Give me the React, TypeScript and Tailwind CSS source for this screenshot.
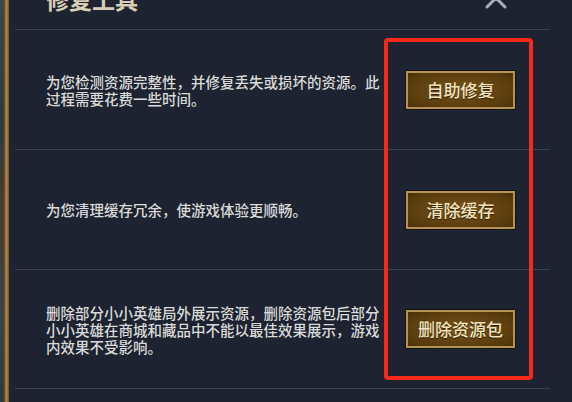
import React from "react";

const FONT = { fontFamily: '"Noto Sans CJK SC", "Noto Sans", sans-serif' };

function GoldButton({ label }: { label: string }) {
  return (
    <div className="ml-auto mr-[34px] shrink-0 w-[111px] h-[40px] rounded-[2px] bg-[#15110b] p-[1px]">
      <div className="w-full h-full border-[2px] border-[#b39457] bg-[radial-gradient(ellipse_at_center,#77541b_0%,#5c3d0e_70%,#4d3209_100%)] flex items-center justify-center">
        <span className="text-[17px] leading-[20px] text-[#f3e3bd] font-medium [text-shadow:0_1px_1px_rgba(0,0,0,0.6)]">
          {label}
        </span>
      </div>
    </div>
  );
}

function Row({ text, label, last }: { text: React.ReactNode; label: string; last?: boolean }) {
  return (
    <div className={`h-[120px] border-t border-[#3a4252] flex items-center pl-[31px] ${last ? "border-b" : ""}`}>
      <div className="w-[340px] text-[14.5px] leading-[17px] font-medium text-[#dadad8]">{text}</div>
      <GoldButton label={label} />
    </div>
  );
}

export default function App() {
  return (
    <div className="relative w-[572px] h-[402px] overflow-hidden flex bg-[#1d2331]" style={FONT}>
      <div className="w-[4px] bg-[linear-gradient(180deg,#3f464c_0%,#2e3a40_30%,#4a3a30_50%,#3c4248_80%,#33383e_100%)]" />
      <div className="w-[5px] bg-[linear-gradient(90deg,#5a4420_0%,#b08a48_50%,#6b5228_100%)]" />
      <div className="flex-1 flex flex-col pl-[6px] pr-[22px]">
        <div className="h-[29px] flex items-start justify-between">
          <div className="pl-[31px] -mt-[12px] text-[23px] leading-[23px] font-bold text-[#d8cfb4]">修复工具</div>
          <svg className="-mt-[13px] mr-[43px]" width="22" height="22" viewBox="0 0 22 22">
            <path d="M2 2 L20 20 M20 2 L2 20" stroke="#a9adb5" strokeWidth="3" strokeLinecap="round" />
          </svg>
        </div>
        <Row
          text="为您检测资源完整性，并修复丢失或损坏的资源。此过程需要花费一些时间。"
          label="自助修复"
        />
        <Row text="为您清理缓存冗余，使游戏体验更顺畅。" label="清除缓存" />
        <Row
          text="删除部分小小英雄局外展示资源，删除资源包后部分小小英雄在商城和藏品中不能以最佳效果展示，游戏内效果不受影响。"
          label="删除资源包"
          last
        />
      </div>
      <div className="absolute left-[384px] top-[38px] w-[149px] h-[342px] border-[4px] border-[#f5281a] rounded-[4px]" />
    </div>
  );
}
